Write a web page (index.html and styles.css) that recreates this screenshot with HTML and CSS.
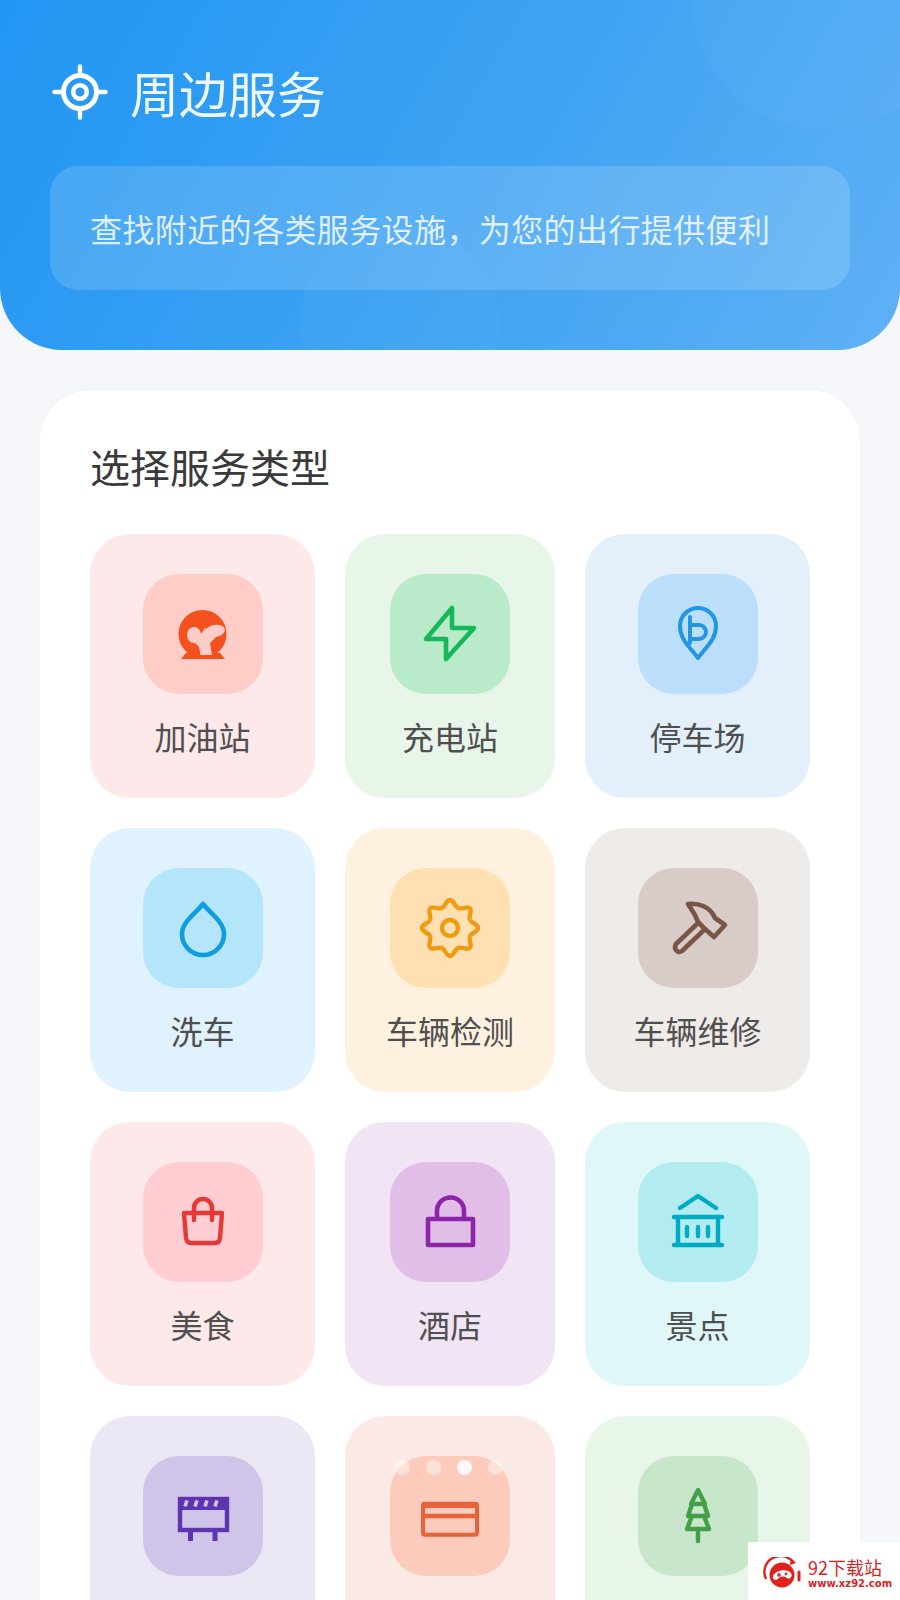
FILE: index.html
```html
<!DOCTYPE html>
<html lang="zh-CN">
  <head>
    <meta charset="UTF-8" />
    <title>周边服务</title>
    <link rel="stylesheet" href="styles.css">
  </head>
  <body>
    <div class="page">
      <header class="header">
        <div class="bubble bubble-top"></div>
        <div class="bubble bubble-bottom"></div>
        <div class="titleRow">
          <svg class="titleIcon" viewBox="0 0 56 56" fill="none" stroke="#fff">
            <circle cx="28" cy="28" r="16.500" stroke-width="5" />
            <circle cx="28" cy="28" r="6.800" stroke-width="4.600" />
            <path d="M28 2.500v7M28 46.500v7M2.500 28h7M46.500 28h7" stroke-width="4.400" stroke-linecap="round" />
          </svg>
          <h1>周边服务</h1>
        </div>
        <div class="infoBox">查找附近的各类服务设施，为您的出行提供便利</div>
      </header>

      <main class="card">
        <h2>选择服务类型</h2>
        <div class="grid">
          <div class="tile tile-red">
            <div class="iconBox">
              <svg viewBox="0 0 120 120">
                <circle cx="59.500" cy="60" r="24" fill="#f4511e" />
                <path d="M43 79H77L82 85H38Z" fill="#f4511e" />
                <g fill="#ffcdc8">
                  <ellipse cx="51" cy="61" rx="7" ry="8" />
                  <ellipse cx="72" cy="57" rx="10" ry="6.200" transform="rotate(-10 72 57)" />
                  <path d="M50 67L56 73L57.500 81H69L67 69L74 62L62 54L58 60Z" />
                </g>
              </svg>
            </div>
            <span class="label">加油站</span>
          </div>
          <div class="tile tile-green">
            <div class="iconBox">
              <svg viewBox="0 0 120 120" fill="none" stroke="#16b85a" stroke-width="4.600" stroke-linejoin="round">
                <path d="M62 34V54H84L56 85V65H36Z" />
              </svg>
            </div>
            <span class="label">充电站</span>
          </div>
          <div class="tile tile-blue">
            <div class="iconBox">
              <svg viewBox="0 0 120 120" fill="none" stroke="#2196e3" stroke-width="4" stroke-linecap="round" stroke-linejoin="round">
                <path d="M60 84C52 73 42 66 42 52A18 18 0 0 1 78 52C78 66 68 73 60 84Z" />
                <path d="M52 43V69M52 51H61A7 7 0 0 1 61 65H52" />
              </svg>
            </div>
            <span class="label">停车场</span>
          </div>

          <div class="tile tile-sky">
            <div class="iconBox">
              <svg viewBox="0 0 120 120" fill="none" stroke="#0f9edd" stroke-width="4.600" stroke-linejoin="round">
                <path d="M60 36C52 46 39 54 39 66A21 21 0 0 0 81 66C81 54 68 46 60 36Z" />
              </svg>
            </div>
            <span class="label">洗车</span>
          </div>
          <div class="tile tile-orange">
            <div class="iconBox">
              <svg viewBox="0 0 120 120" fill="none" stroke="#f09a12" stroke-width="4.400" stroke-linejoin="round">
                <g>
                  <path id="gearTooth" d="M51.770 40.140C55.470 38.610 56 32 60 32C64 32 64.530 38.610 68.230 40.140" />
                  <use href="#gearTooth" transform="rotate(45 60 60)" />
                  <use href="#gearTooth" transform="rotate(90 60 60)" />
                  <use href="#gearTooth" transform="rotate(135 60 60)" />
                  <use href="#gearTooth" transform="rotate(180 60 60)" />
                  <use href="#gearTooth" transform="rotate(225 60 60)" />
                  <use href="#gearTooth" transform="rotate(270 60 60)" />
                  <use href="#gearTooth" transform="rotate(315 60 60)" />
                </g>
                <circle cx="60" cy="60" r="8" />
              </svg>
            </div>
            <span class="label">车辆检测</span>
          </div>
          <div class="tile tile-brown">
            <div class="iconBox">
              <svg viewBox="0 0 120 120" fill="none" stroke="#795548" stroke-width="4.600" stroke-linejoin="round">
                <path d="M50 36C60 35 72 38 77 50L87 57L76 69L66 60L60 54L57 47Z" />
                <path d="M60 55L38 76C35 81 40 86 44 83L67 61" />
              </svg>
            </div>
            <span class="label">车辆维修</span>
          </div>

          <div class="tile tile-rose">
            <div class="iconBox">
              <svg viewBox="0 0 120 120" fill="none" stroke="#e53935" stroke-width="4.400" stroke-linecap="round" stroke-linejoin="round">
                <path d="M41 51H79L77 76Q76.500 81 72 81H48Q43.500 81 43 76Z" />
                <path d="M51 58V46A9 9 0 0 1 69 46V58" />
              </svg>
            </div>
            <span class="label">美食</span>
          </div>
          <div class="tile tile-purple">
            <div class="iconBox">
              <svg viewBox="0 0 120 120" fill="none" stroke="#8e24aa" stroke-width="4.600" stroke-linejoin="round">
                <rect x="38" y="57" width="45" height="26" />
                <path d="M47 57V49A13.500 13.500 0 0 1 74 49V57" />
              </svg>
            </div>
            <span class="label">酒店</span>
          </div>
          <div class="tile tile-teal">
            <div class="iconBox">
              <svg viewBox="0 0 120 120" fill="none" stroke="#00acc1" stroke-width="4.400" stroke-linecap="round" stroke-linejoin="round">
                <path d="M42 46L60 34L78 46" />
                <path d="M36 55H84M36 83H84M40 55V83M80 55V83" />
                <path d="M49 65V74M60 65V74M70 65V74" />
              </svg>
            </div>
            <span class="label">景点</span>
          </div>

          <div class="tile tile-indigo">
            <div class="iconBox">
              <svg viewBox="0 0 120 120" fill="none" stroke="#5e35b1" stroke-width="4.400">
                <rect x="37" y="43" width="47" height="31" />
                <rect x="35" y="41" width="51" height="13" fill="#5e35b1" stroke="none" />
                <path d="M42 50.500L44 44.500M52 50.500L54 44.500M62 50.500L64 44.500M72 50.500L74 44.500" stroke="#d1c4e9" stroke-width="3.600" />
                <path d="M47.500 74V85M72 74V85" stroke-width="5" />
              </svg>
            </div>
          </div>
          <div class="tile tile-peach">
            <div class="iconBox">
              <svg viewBox="0 0 120 120" fill="none" stroke="#e8623a" stroke-width="4" stroke-linejoin="round">
                <rect x="33" y="47.700" width="54" height="31" rx="2" />
                <path d="M32 49H88" stroke-width="6" />
                <path d="M32 60H88" stroke-width="4.400" />
              </svg>
            </div>
          </div>
          <div class="tile tile-leaf">
            <div class="iconBox">
              <svg viewBox="0 0 120 120" fill="none" stroke="#43a047" stroke-width="4.400" stroke-linecap="round" stroke-linejoin="round">
                <path d="M60 34L53 48H67Z" />
                <path d="M54 48L50 60H70L66 48" />
                <path d="M54 60L49 73H71L66 60" />
                <path d="M60 73V85" />
              </svg>
            </div>
          </div>
        </div>
      </main>

      <div class="dots">
        <span class="dot"></span>
        <span class="dot"></span>
        <span class="dot dot-active"></span>
        <span class="dot"></span>
      </div>

      <div class="watermark">
        <svg class="watermarkLogo" viewBox="0 0 40 32" fill="none">
          <path d="M4 22A16 16 0 0 1 30 4" stroke="#e0211c" stroke-width="2.400" />
          <path d="M29 1L34 6L28 8Z" fill="#e0211c" />
          <circle cx="20" cy="18" r="12.500" fill="#e0211c" />
          <path d="M37 15V23" stroke="#e0211c" stroke-width="3" stroke-linecap="round" />
          <path d="M11 19C13 13 25 11 29 16C31 19 28 23 25 21C22 19 18 19 16 22C13 24 10 22 11 19Z" fill="#fff" />
          <path d="M15 18H19M17 16V20" stroke="#e0211c" stroke-width="1.400" />
          <circle cx="24" cy="17" r="1.400" fill="#e0211c" />
        </svg>
        <div class="watermarkText">
          <span class="watermarkName">92下载站</span>
          <span class="watermarkUrl">www.xz92.com</span>
        </div>
      </div>
    </div>
  </body>
</html>
```

FILE: styles.css
```css
* {
  box-sizing: border-box;
  font-family: "Noto Sans CJK SC", "Noto Sans", sans-serif;
}

body {
  margin: 0;
  background-color: #f5f7fa;
}

.page {
  position: relative;
  height: 1600px;
  overflow: hidden;
  background-color: #f5f7fa;
}

.header {
  position: relative;
  height: 350px;
  padding: 64px 50px 0;
  overflow: hidden;
  background: linear-gradient(120deg, #2196f3 0%, #3fa3f2 55%, #5fb1f5 100%);
  border-radius: 0 0 62px 62px;
}

.bubble {
  position: absolute;
  border-radius: 50%;
  background: rgba(255, 255, 255, 0.025);
}

.bubble-top {
  top: -140px;
  right: -60px;
  width: 270px;
  height: 270px;
}

.bubble-bottom {
  top: 225px;
  left: 300px;
  width: 200px;
  height: 200px;
}

.titleRow {
  position: relative;
  display: flex;
  align-items: center;
  gap: 22px;
  height: 56px;
  padding-left: 2px;
}

.titleIcon {
  width: 56px;
  height: 56px;
}

h1 {
  margin: 0;
  font-size: 49px;
  font-weight: 400;
  line-height: 56px;
  color: rgba(255, 255, 255, 0.92);
}

.infoBox {
  position: relative;
  display: flex;
  align-items: center;
  height: 124px;
  margin-top: 46px;
  padding: 0 40px;
  font-size: 32px;
  letter-spacing: 0.4px;
  color: rgba(255, 255, 255, 0.82);
  background: rgba(255, 255, 255, 0.15);
  border-radius: 28px;
}

.card {
  height: 1300px;
  margin: 40px 40px 0;
  padding: 48px 50px 0;
  background: #ffffff;
  border-radius: 50px;
  box-shadow: 0 -1px 2px rgba(0, 0, 0, 0.03);
}

h2 {
  margin: 0 0 40px;
  font-size: 40px;
  font-weight: 400;
  line-height: 56px;
  color: #3a3a3a;
}

.grid {
  display: grid;
  grid-template-columns: 225px 210px 225px;
  gap: 30px;
}

.tile {
  display: flex;
  flex-direction: column;
  align-items: center;
  min-height: 264px;
  padding: 40px 0 38px;
  border-radius: 40px;
}

.iconBox {
  display: flex;
  align-items: center;
  justify-content: center;
  width: 120px;
  height: 120px;
  border-radius: 36px;
}

.iconBox svg {
  width: 120px;
  height: 120px;
}

.label {
  margin-top: 20px;
  font-size: 32px;
  line-height: 44px;
  color: #4f4f4f;
}

.tile-red { background: #fde8ea; }
.tile-red .iconBox { background: #ffcdc8; }
.tile-green { background: #e8f5e9; }
.tile-green .iconBox { background: #b9ebcb; }
.tile-blue { background: #e3f0fc; }
.tile-blue .iconBox { background: #bbdefb; }
.tile-sky { background: #e0f2fd; }
.tile-sky .iconBox { background: #b5e5fb; }
.tile-orange { background: #fff1df; }
.tile-orange .iconBox { background: #ffe0b2; }
.tile-brown { background: #efebe9; }
.tile-brown .iconBox { background: #d7ccc8; }
.tile-rose { background: #fde8ea; }
.tile-rose .iconBox { background: #ffcdd2; }
.tile-purple { background: #f1e4f5; }
.tile-purple .iconBox { background: #e1bee7; }
.tile-teal { background: #e0f7fa; }
.tile-teal .iconBox { background: #b2ebf0; }
.tile-indigo { background: #ebe7f5; }
.tile-indigo .iconBox { background: #d1c4e9; }
.tile-peach { background: #fbe9e5; }
.tile-peach .iconBox { background: #fccbbc; }
.tile-leaf { background: #e8f5e9; }
.tile-leaf .iconBox { background: #c8e6c9; }

.dots {
  position: absolute;
  top: 1460px;
  left: 395px;
  display: flex;
  gap: 16px;
}

.dot {
  width: 15px;
  height: 15px;
  background: rgba(255, 255, 255, 0.4);
  border-radius: 50%;
}

.dot-active {
  background: rgba(255, 255, 255, 0.9);
}

.watermark {
  position: absolute;
  right: 0;
  bottom: 0;
  display: flex;
  align-items: center;
  gap: 6px;
  width: 152px;
  height: 58px;
  padding: 4px 0 0 14px;
  background: #fff;
}

.watermarkLogo {
  flex: none;
  width: 40px;
  height: 32px;
}

.watermarkText {
  display: flex;
  flex-direction: column;
}

.watermarkName {
  font-size: 18px;
  line-height: 21px;
  color: #d8231f;
}

.watermarkUrl {
  font-family: "DejaVu Sans", sans-serif;
  font-size: 10px;
  font-weight: 700;
  line-height: 12px;
  color: #d8231f;
}
```
